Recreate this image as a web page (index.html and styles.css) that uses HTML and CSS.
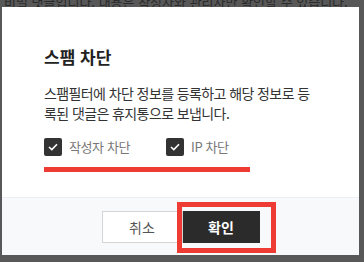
FILE: index.html
```html
<!DOCTYPE html>
<html lang="ko">
<head>
    <meta charset="UTF-8">
    <meta name="viewport" content="width=device-width, initial-scale=1.0">
    <title>스팸 차단</title>
    <link rel="stylesheet" href="styles.css">
</head>
<body>
    <!-- 뒤쪽 페이지 -->
    <div class="page-behind">
        <p>비밀 댓글입니다. 내용은 작성자와 관리자만 확인할 수 있습니다.</p>
    </div>

    <!-- 스팸 차단 모달 -->
    <div class="modal">
        <div class="modal-body">
            <h2 class="modal-title">스팸 차단</h2>
            <p class="modal-desc">스팸필터에 차단 정보를 등록하고 해당 정보로 등록된 댓글은 휴지통으로 보냅니다.</p>

            <div class="check-row">
                <label class="check">
                    <span class="box">
                        <svg width="10" height="8" viewBox="0 0 10 8"><path d="M1 4l2.8 2.6L9 1.2" fill="none" stroke="#fff" stroke-width="1.6"/></svg>
                    </span>
                    작성자 차단
                </label>
                <label class="check">
                    <span class="box">
                        <svg width="10" height="8" viewBox="0 0 10 8"><path d="M1 4l2.8 2.6L9 1.2" fill="none" stroke="#fff" stroke-width="1.6"/></svg>
                    </span>
                    IP 차단
                </label>
            </div>
            <div class="mark-line"></div>
        </div>

        <div class="modal-footer">
            <button class="btn btn-cancel">취소</button>
            <span class="btn-wrap">
                <button class="btn btn-ok">확인</button>
                <span class="mark-box"></span>
            </span>
        </div>
    </div>
</body>
</html>
```

FILE: styles.css
```css
* {
    margin: 0;
    padding: 0;
    box-sizing: border-box;
}

body {
    font-family: "Noto Sans CJK KR", "Noto Sans", sans-serif;
    background-color: #585858;
    color: #333;
    width: 364px;
    height: 262px;
    overflow: hidden;
    position: relative;
}

.page-behind {
    position: absolute;
    top: -8px;
    left: 4px;
    width: 356px;
    overflow: hidden;
    font-size: 13px;
    color: #2a2a2a;
    white-space: nowrap;
}

.modal {
    position: relative;
    margin: 7px 0 0 2px;
    width: 357px;
    height: 248px;
    background: #fff;
    display: flex;
    flex-direction: column;
}

.modal-body {
    flex: 1;
    padding: 38px 40px 0 40px;
}

.modal-title {
    font-size: 17px;
    line-height: 24px;
    font-weight: bold;
    color: #222;
    padding-left: 2px;
}

.modal-desc {
    margin-top: 14px;
    padding-left: 2px;
    font-size: 14px;
    line-height: 20px;
    letter-spacing: -0.6px;
    color: #333;
    width: 278px;
}

.check-row {
    display: flex;
    margin-top: 15px;
    padding-left: 2px;
    gap: 36px;
}

.check {
    display: flex;
    align-items: center;
    gap: 7px;
    font-size: 13px;
    line-height: 18px;
    letter-spacing: -0.4px;
    color: #777;
}

.box {
    width: 18px;
    height: 18px;
    background: #333;
    border-radius: 2px;
    display: flex;
    align-items: center;
    justify-content: center;
}

.mark-line {
    margin: 11px 0 0 2px;
    width: 206px;
    height: 5px;
    background: #ee3b33;
}

.modal-footer {
    height: 58px;
    background: #f8f9fb;
    border-top: 1px solid #eceef1;
    display: flex;
    justify-content: center;
    align-items: flex-start;
    padding-top: 13px;
}

.btn {
    height: 32px;
    font-family: inherit;
    font-size: 14px;
    cursor: pointer;
}

.btn-cancel {
    width: 81px;
    background: #fff;
    border: 1px solid #d5d5d5;
    color: #555;
}

.btn-wrap {
    position: relative;
    display: block;
}

.btn-ok {
    width: 77px;
    background: #2b2b2b;
    border: none;
    color: #fff;
    font-weight: bold;
}

.mark-box {
    position: absolute;
    left: -6px;
    top: -9px;
    width: 99px;
    height: 51px;
    border: 5px solid #ee3b33;
}
```
